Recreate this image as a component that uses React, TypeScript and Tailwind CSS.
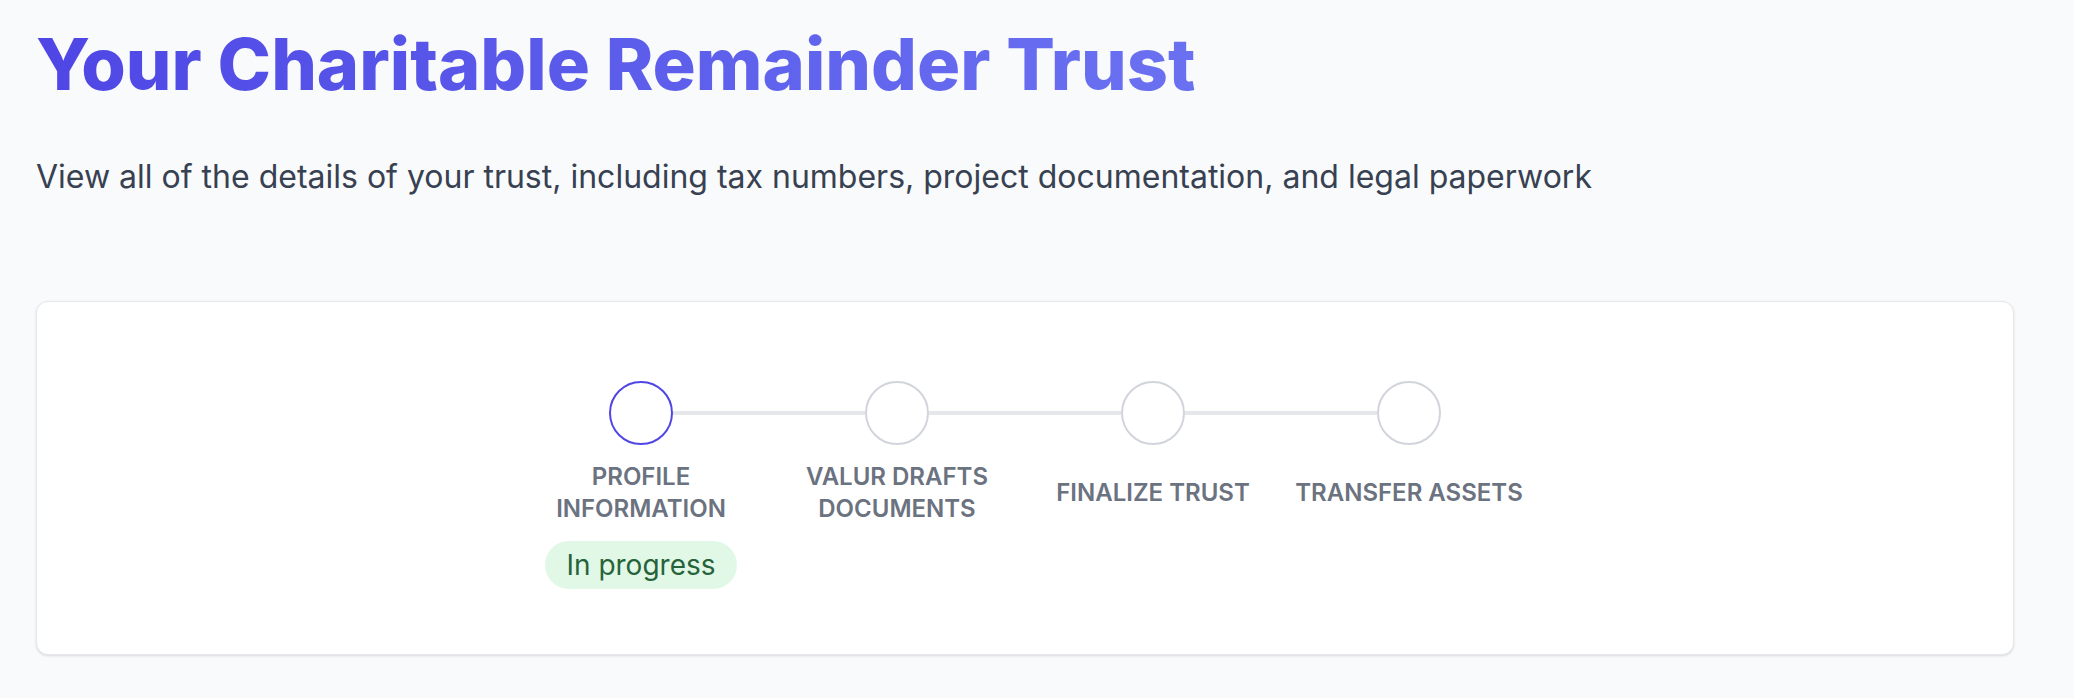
const steps = [
  { label: 'Profile Information', active: true, status: 'In progress' },
  { label: 'Valur Drafts Documents', active: false },
  { label: 'Finalize Trust', active: false },
  { label: 'Transfer Assets', active: false },
];

function Stepper() {
  return (
    <div className="flex justify-center">
      {steps.map((step, index) => (
        <div key={step.label} className="flex w-64 flex-col items-center">
          {/* circle with half connectors on both sides */}
          <div className="flex w-full items-center">
            <div className={`h-1 flex-1 ${index === 0 ? 'bg-transparent' : 'bg-[#e5e7eb]'}`} />
            <div
              className={`h-16 w-16 shrink-0 rounded-full border-2 bg-white ${
                step.active ? 'border-[#4f46e5]' : 'border-[#d1d5db]'
              }`}
            />
            <div className={`h-1 flex-1 ${index === steps.length - 1 ? 'bg-transparent' : 'bg-[#e5e7eb]'}`} />
          </div>

          <div className="mt-4 flex h-16 w-full items-center justify-center px-1">
            <span className="text-center text-2xl font-semibold uppercase text-[#6b7280]">
              {step.label}
            </span>
          </div>

          {step.status && (
            <span className="mt-4 rounded-full bg-[#e1f8e7] px-[21px] text-[28px] leading-[48px] text-[#27633a]">
              {step.status}
            </span>
          )}
        </div>
      ))}
    </div>
  );
}

export default function App() {
  return (
    <div className="min-h-screen bg-[#f9fafb] pl-9 pr-[60px] pt-[28px] font-['Inter',sans-serif]">
      <h1 className="bg-gradient-to-r from-[#4f46e5] to-[#818cf8] bg-clip-text text-7xl font-extrabold text-transparent">
        Your Charitable Remainder Trust
      </h1>
      <p className="mt-[57px] text-[32px] leading-10 text-[#374151]">
        View all of the details of your trust, including tax numbers, project documentation, and legal paperwork
      </p>

      <div className="mt-[104px] rounded-xl border border-[#e5e7eb] bg-white pb-[65px] pt-[79px] shadow-sm">
        <Stepper />
      </div>
    </div>
  );
}
